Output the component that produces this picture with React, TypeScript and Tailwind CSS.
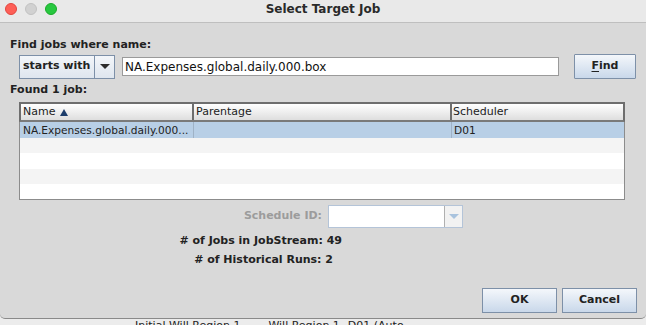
import React from "react";

const font = { fontFamily: '"DejaVu Sans", "Liberation Sans", sans-serif' };

function Row({ i, selected }: { i: number; selected?: boolean }) {
  const bg = selected ? "bg-[#b8cfe6]" : i % 2 === 1 ? "bg-[#f4f4f4]" : "bg-white";
  return (
    <div className={`flex h-[16px] ${bg} text-[10.6px] leading-[16px] text-[#222]`}>
      <div className={`w-[174px] pl-[3px] overflow-hidden whitespace-nowrap ${selected ? "border-r border-[#9fb2c6]" : ""}`}>
        {selected ? "NA.Expenses.global.daily.000..." : ""}
      </div>
      <div className={`w-[258px] ${selected ? "border-r border-[#9fb2c6]" : ""}`}></div>
      <div className="flex-1 pl-[2px]">{selected ? "D01" : ""}</div>
    </div>
  );
}

export default function App() {
  return (
    <div className="w-[646px] h-[325px] overflow-hidden bg-[#ececec] text-[#1e1e1e]" style={font}>
      <div className="h-[319px] bg-[#d9d9d9] rounded-b-[5px] flex flex-col border-b border-[#8a8a8a]">
        {/* title bar */}
        <div className="h-[23px] shrink-0 bg-[#e9e9e9] border-b border-[#bfbfbf] flex items-center relative">
          <div className="flex gap-[8px] pl-[5px] pb-[4px]">
            <div className="w-[12px] h-[12px] rounded-full bg-[#fe5f57] border border-[#e2463f]" />
            <div className="w-[12px] h-[12px] rounded-full bg-[#d1d1d1] border border-[#c2c2c2]" />
            <div className="w-[12px] h-[12px] rounded-full bg-[#28c840] border border-[#1aab29]" />
          </div>
          <div className="absolute inset-x-0 top-[1px] text-center text-[12px] font-bold text-[#2a2a2a] leading-[16px]">
            Select Target Job
          </div>
        </div>

        <div className="pl-[10px] pt-[14px] text-[11px] font-bold leading-[16px] text-[#222] whitespace-nowrap">Find jobs where name:</div>

        <div className="flex items-center mt-[1px] h-[25px]">
          {/* combo */}
          <div className="ml-[19px] w-[96px] h-[24px] flex border border-[#7d90a8] bg-gradient-to-b from-[#f3f6fa] to-[#dfe6ef]">
            <div className="w-[75px] border-r border-[#7d90a8] flex items-center pl-[3px] text-[11px] font-bold text-[#222] whitespace-nowrap">starts with</div>
            <div className="flex-1 flex items-center justify-center">
              <div className="w-0 h-0 border-l-[5px] border-r-[5px] border-t-[5px] border-l-transparent border-r-transparent border-t-[#2c2c2c]" />
            </div>
          </div>
          {/* text field */}
          <div className="ml-[7px] w-[437px] h-[19px] bg-white border border-[#9a9a9a] flex items-center pl-[2px] text-[12px] text-[#111] whitespace-nowrap">
            NA.Expenses.global.daily.000.box
          </div>
          {/* find button */}
          <div className="ml-[15px] w-[62px] h-[25px] border border-[#7d90a8] rounded-[1px] bg-gradient-to-b from-[#f4f7fb] to-[#c9d8ea] flex items-center justify-center text-[11px] font-bold text-[#222]">
            <span className="underline underline-offset-2">F</span>ind
          </div>
        </div>

        <div className="pl-[10px] pt-[3px] text-[11px] font-bold leading-[16px] text-[#222]">Found 1 job:</div>

        {/* table */}
        <div className="ml-[19px] mt-[4px] w-[606px] h-[98px] bg-white border border-[#8c8c8c] border-t-0 flex flex-col">
          <div className="flex h-[20px] border-2 border-[#6e6e6e] border-b-[#7a7a7a] bg-gradient-to-b from-white to-[#dedede] text-[11px] leading-[16px] text-[#222] mx-[-1px]">
            <div className="w-[173px] border-r-2 border-[#6e6e6e] pl-[2px] flex items-center gap-[5px]">
              Name
              <span className="w-0 h-0 border-l-[4px] border-r-[4px] border-b-[7px] border-l-transparent border-r-transparent border-b-[#1c3d6b]" />
            </div>
            <div className="w-[258px] border-r-2 border-[#6e6e6e] pl-[2px] flex items-center">Parentage</div>
            <div className="flex-1 pl-[1px] flex items-center">Scheduler</div>
          </div>
          <Row i={0} selected />
          <Row i={1} />
          <Row i={2} />
          <Row i={3} />
          <Row i={4} />
        </div>

        {/* schedule id */}
        <div className="flex items-center mt-[5px] h-[23px]">
          <div className="w-[322px] text-right text-[11px] font-bold text-[#9c9c9c]">Schedule ID:</div>
          <div className="ml-[6px] w-[135px] h-[23px] flex border border-[#b4c4d8] bg-white">
            <div className="w-[116px] border-r border-[#b0b0b0]" />
            <div className="flex-1 flex items-center justify-center bg-[#f2f2f2]">
              <div className="w-0 h-0 border-l-[5px] border-r-[5px] border-t-[5px] border-l-transparent border-r-transparent border-t-[#a9c3de]" />
            </div>
          </div>
        </div>

        <div className="flex mt-[3px]">
          <div className="w-[342px] text-right text-[11px] font-bold leading-[19px] text-[#222]"># of Jobs in JobStream: 49</div>
        </div>
        <div className="flex">
          <div className="w-[333px] text-right text-[11px] font-bold leading-[19px] text-[#222]"># of Historical Runs: 2</div>
        </div>

        <div className="flex justify-end gap-[5px] pr-[9px] mt-[19px]">
          <div className="w-[75px] h-[25px] border border-[#7d90a8] bg-gradient-to-b from-[#f4f7fb] to-[#c9d8ea] flex items-center justify-center text-[11px] font-bold text-[#222]">OK</div>
          <div className="w-[75px] h-[25px] border border-[#7d90a8] bg-gradient-to-b from-[#f4f7fb] to-[#c9d8ea] flex items-center justify-center text-[11px] font-bold text-[#222]">Cancel</div>
        </div>
      </div>
      <div className="h-[6px] overflow-hidden relative">
        <div className="flex text-[11px] leading-[12px] text-[#222] whitespace-nowrap mt-[1px]">
          <span className="ml-[135px]">Initial.Will.Region.1</span>
          <span className="ml-[28px]">Will.Region.1</span>
          <span className="ml-[8px]">D01 (Auto</span>
        </div>
      </div>
    </div>
  );
}
